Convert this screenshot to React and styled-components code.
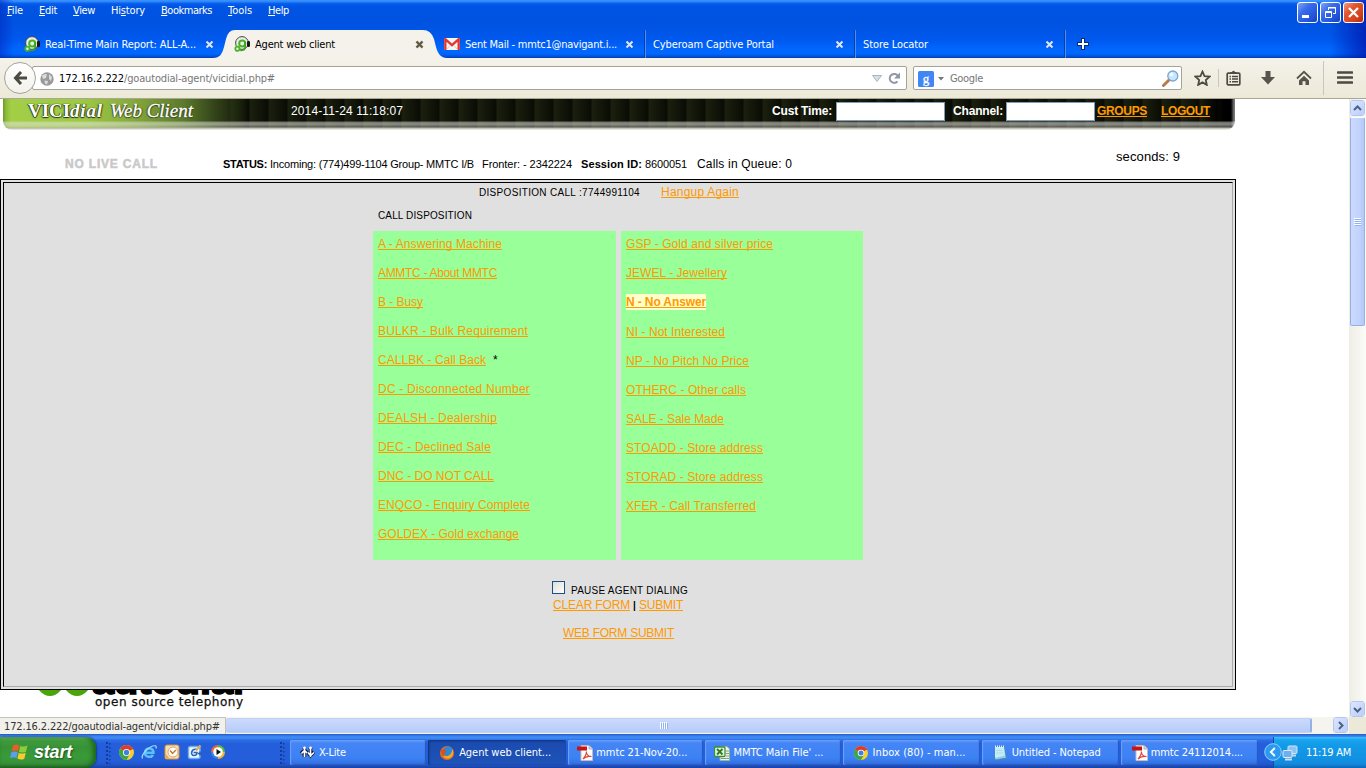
import React, { useLayoutEffect, useRef } from "react";
import styled, { createGlobalStyle, css } from "styled-components";

const Global = createGlobalStyle`
  * { box-sizing: border-box; }
  html, body { margin: 0; padding: 0; overflow: hidden; background: #fff; }
  svg { display: block; flex: none; }
`;

const ui = `"DejaVu Sans Condensed", "Noto Sans", sans-serif`;
const sans = `"Liberation Sans", Arial, sans-serif`;

/* ---------- text set to a fixed measure ---------- */

const TextBox = styled.span`
  display: inline-block;
  flex: none;
  white-space: pre;
  width: ${(p) => p.$w}px;
  margin-left: ${(p) => p.$ml || 0}px;
  color: ${(p) => p.$color || "inherit"};
  font-weight: ${(p) => (p.$bold ? 700 : "inherit")};
  font-size: ${(p) => (p.$size ? `${p.$size}px` : "inherit")};
`;

function Text({ w, ml, color, bold, size, children }) {
  const inner = useRef(null);
  useLayoutEffect(() => {
    const el = inner.current;
    el.style.letterSpacing = "0px";
    const n = el.textContent.length;
    el.style.letterSpacing = `${(w - el.getBoundingClientRect().width) / n}px`;
  }, [w, children]);
  return (
    <TextBox $w={w} $ml={ml} $color={color} $bold={bold} $size={size}>
      <span ref={inner}>{children}</span>
    </TextBox>
  );
}

/* ---------- window frame ---------- */

const Screen = styled.div`
  width: 1366px;
  height: 768px;
  display: flex;
  flex-direction: column;
  overflow: hidden;
  font-family: ${ui};
  font-size: 11px;
`;

const Frame = styled.header`
  height: 58px;
  display: flex;
  flex-direction: column;
  background: linear-gradient(90deg, rgba(0, 40, 190, 0.55) 0, rgba(0, 60, 220, 0) 14px, rgba(0, 60, 220, 0) 1330px, rgba(0, 20, 170, 0.75) 1366px),
    linear-gradient(180deg, #3d95ff 0, #2a83fa 2px, #0a62f0 3px, #0054e3 6px, #0053e1 22px, #0056e8 34px, #005bf2 42px, #0068ff 50px, #0066fd 54px, #004ccf 57px, #003aa8 58px);
`;

const TitleRow = styled.div`
  height: 30px;
  display: flex;
  justify-content: space-between;
`;

const MenuBar = styled.nav`
  display: flex;
  color: #fff;
  padding: 3px 0 0 7px;
  line-height: 15px;
  & u { text-underline-offset: 1px; text-decoration-thickness: 1px; }
`;

const WindowButtons = styled.div`
  display: flex;
  gap: 2px;
  padding: 2px 2px 0 0;
`;

const WindowButton = styled.div`
  width: 21px;
  height: 21px;
  border: 1px solid #fff;
  border-radius: 3px;
  display: flex;
  align-items: center;
  justify-content: center;
  background: ${(p) =>
    p.$close
      ? "linear-gradient(135deg, #f09a80 0, #e2552f 35%, #d8431c 70%, #b52c08 100%)"
      : "linear-gradient(135deg, #7fa4f4 0, #3a6cec 35%, #2457dd 70%, #1940b8 100%)"};
`;

const TabStrip = styled.div`
  height: 28px;
  display: flex;
  padding-left: 15px;
  color: #fff;
`;

const TabItem = styled.div`
  width: 210px;
  height: 28px;
  position: relative;
  display: flex;
  align-items: center;
  padding-left: ${(p) => p.$pad}px;
  color: ${(p) => (p.$active ? "#000" : "#fff")};
  ${(p) =>
    p.$line &&
    css`
      left: 1px;
      border-right: 1px solid #4a8ff5;
      box-shadow: inset -1px 0 0 #0a3ea8;
    `}
`;

const TabShape = styled.svg`
  position: absolute;
  left: -12px;
  top: 0;
`;

const TabIcon = styled.div`
  position: relative;
  width: 16px;
  margin-right: 5px;
`;

const TabLabel = styled.div`
  position: relative;
  flex: 1;
  line-height: 15px;
`;

const TabClose = styled.div`
  position: relative;
  margin-right: ${(p) => p.$mr}px;
`;

const PlusBox = styled.div`
  display: flex;
  align-items: center;
  padding-left: 12px;
`;

/* ---------- toolbar ---------- */

const Toolbar = styled.div`
  height: 41px;
  flex: none;
  display: flex;
  align-items: center;
  background: linear-gradient(180deg, #f4f2ea, #ece9d8);
  border-bottom: 1px solid #a9a799;
`;

const BackButton = styled.div`
  width: 32px;
  height: 32px;
  margin: 0 0 1px 4px;
  flex: none;
  border-radius: 50%;
  border: 1px solid #a3a39c;
  background: linear-gradient(180deg, #fff, #f3f1e9);
  display: flex;
  align-items: center;
  justify-content: center;
  z-index: 1;
`;

const Field = styled.div`
  height: 24px;
  width: ${(p) => p.$w}px;
  margin-left: ${(p) => p.$ml}px;
  padding: 2px 0 0 ${(p) => p.$pl}px;
  margin-bottom: 1px;
  border: 1px solid #a4a299;
  border-radius: 2px;
  background: #fff;
  display: flex;
  align-items: center;
  line-height: 15px;
`;

const Push = styled.div`
  margin-left: auto;
  margin-right: ${(p) => p.$mr || 0}px;
`;

const ToolIcons = styled.div`
  flex: 1;
  display: flex;
  align-items: center;
  padding: 0 0 1px 12px;
`;

const ToolSlot = styled.div`
  width: ${(p) => p.$w}px;
  display: flex;
  flex: none;
`;

const ToolLine = styled.div`
  width: 1px;
  height: ${(p) => p.$h}px;
  margin: 0 ${(p) => p.$mr}px 0 ${(p) => p.$ml}px;
  background: #c9c7bb;
`;

/* ---------- page ---------- */

const Viewport = styled.main`
  height: 618px;
  flex: none;
  display: flex;
`;

const Page = styled.div`
  width: 1349px;
  height: 618px;
  overflow: hidden;
  background: #fff;
  font-family: ${sans};
  font-size: 12px;
  color: #000;
`;

const Banner = styled.div`
  width: 1232px;
  height: 31px;
  margin-left: 3px;
  display: flex;
  align-items: flex-start;
  color: #fff;
  border-radius: 0 0 9px 9px;
  background: linear-gradient(180deg, transparent 28px, #b3b1a0 29px, #d8d7cf 30px, #f0f0ee 31px),
    linear-gradient(180deg, transparent 22px, rgba(225, 225, 220, 0.45) 23px, rgba(225, 225, 220, 0.6) 25px, rgba(225, 225, 220, 0.35) 28px),
    linear-gradient(90deg, #6f9a28 0, #8fba3a 3px, #a3cf47 8px, #9dc843 80px, #86a93c 130px, #5c7a2c 180px, #2f3e17 215px, rgba(20, 26, 8, 0) 245px),
    linear-gradient(90deg, transparent 1196px, #000 1222px, #000 1228px, #777 1231px),
    repeating-linear-gradient(90deg, #1b200e 0, #0a0c05 18px, #1b200e 19px);
`;

const Brand = styled.div`
  width: 288px;
  padding: 1px 0 0 25px;
  font: 700 19px/22px "Liberation Serif", serif;
  text-shadow: 0 1px 1px #24300c, 1px 0 1px #3c4e17, -1px 0 1px #3c4e17;
  display: flex;
`;

const BrandThin = styled.i`
  font-weight: 400;
  -webkit-text-stroke: 0.3px #fff;
`;

const BannerText = styled.div`
  line-height: 15px;
  padding-top: 5px;
  margin-left: ${(p) => p.$ml || 0}px;
`;

const Input = styled.div`
  width: ${(p) => p.$w}px;
  height: 19px;
  margin: 3px 0 0 ${(p) => p.$ml}px;
  background: #fff;
  border: 1px solid #7f9db9;
`;

const Link = styled.a`
  color: #ff9900;
  ${(p) =>
    p.$picked &&
    css`
      background: #ffffcc;
      height: 16px;
      margin-top: -1px;
      padding-top: 1px;
    `}
  & span span {
    text-decoration: underline;
    text-decoration-skip-ink: none;
    text-decoration-thickness: 1px;
    text-underline-offset: 1px;
  }
`;

const StatusRow = styled.div`
  height: 49px;
  display: flex;
  align-items: flex-end;
  padding: 0 0 7px 65px;
  line-height: 15px;
`;

const NoLive = styled.div`
  color: #c9c9c9;
  font-size: 12px;
  -webkit-text-stroke: 0.5px #c9c9c9;
`;

const Seconds = styled.div`
  margin-left: 324px;
  align-self: flex-start;
  font-size: 13px;
  padding-top: 19px;
`;

const Panel = styled.section`
  width: 1236px;
  height: 511px;
  border: 1px solid #000;
  padding: 2px;
  background: #e0e0e0;
`;

const PanelInner = styled.div`
  height: 505px;
  border: 1px solid;
  border-color: #000 #aaa #aaa #000;
  display: flex;
  flex-direction: column;
`;

const DispoTitle = styled.div`
  height: 23px;
  display: flex;
  align-items: baseline;
  padding: 2px 0 0 475px;
  line-height: 15px;
`;

const SubTitle = styled.div`
  height: 25px;
  padding: 2px 0 0 374px;
  line-height: 15px;
`;

const Columns = styled.div`
  display: flex;
  gap: 5px;
  padding-left: 369px;
`;

const Column = styled.div`
  width: ${(p) => p.$w}px;
  height: 329px;
  background: #99ff99;
  padding: 6px 0 0 5px;
  display: flex;
  flex-direction: column;
  gap: 14px;
`;

const Option = styled.div`
  line-height: 15px;
  height: ${(p) => (p.$picked ? 16 : 15)}px;
  display: flex;
  white-space: pre;
`;

const Pause = styled.div`
  display: flex;
  padding: 21px 0 0 548px;
  height: 38px;
`;

const CheckBox = styled.div`
  width: 13px;
  height: 13px;
  border: 1px solid #1c5180;
  background: linear-gradient(135deg, #dcdcd7, #fff);
`;

const PauseLabel = styled.div`
  margin-left: 6px;
  padding-top: 2px;
  line-height: 15px;
`;

const FormLinks = styled.div`
  display: flex;
  padding-left: ${(p) => p.$pl}px;
  height: 28px;
  line-height: 15px;
`;

const Footer = styled.div`
  height: 27px;
  padding-left: 36px;
`;

/* ---------- scroll bars ---------- */

const VScroll = styled.div`
  width: 17px;
  height: 618px;
  background: linear-gradient(90deg, #eeede5, #fbfbf8);
  display: flex;
  flex-direction: column;
  justify-content: space-between;
  padding: 1px 0 0 1px;
`;

const HScrollRow = styled.div`
  height: 17px;
  flex: none;
  display: flex;
  background: #f5f4ee;
`;

const ScrollButton = styled.div`
  width: 15px;
  height: 16px;
  flex: none;
  border: 1px solid #fff;
  border-radius: 3px;
  outline: 1px solid #b4c6f0;
  outline-offset: -1px;
  background: linear-gradient(135deg, #dce6ff, #b9cefa);
  display: flex;
  align-items: center;
  justify-content: center;
`;

const VThumb = styled.div`
  width: 15px;
  height: 209px;
  margin-top: 1px;
  border: 1px solid #98b0e8;
  border-top-color: #fff;
  border-radius: 2px;
  background: linear-gradient(90deg, #cbd9fd, #c2d4fd 60%, #b4c9f8);
  display: flex;
  align-items: center;
  justify-content: center;
`;

const HThumb = styled.div`
  width: 1086px;
  height: 15px;
  margin-top: 1px;
  border: 1px solid #c3d1f3;
  border-width: 1px 2px 1px 0;
  border-right-color: #98b0e8;
  border-radius: 2px;
  background: linear-gradient(180deg, #cbd9fb, #bfd2fc 60%, #b6cbf8);
  display: flex;
  align-items: center;
  padding-left: 434px;
`;

const StatusTip = styled.div`
  width: 226px;
  height: 17px;
  background: #f1f0ea;
  border: solid #c4c2b8;
  border-width: 1px 1px 0 0;
  color: #333;
  padding-left: 4px;
  line-height: 17px;
`;

const Corner = styled.div`
  width: 17px;
  height: 17px;
  background: #ece9d8;
`;

/* ---------- task bar ---------- */

const Taskbar = styled.footer`
  height: 34px;
  flex: none;
  display: flex;
  color: #fff;
  background: linear-gradient(180deg, #1f58c4 0, #3a80ee 2px, #3f8df4 4px, #2c6de6 6px, #245edb 10px, #245edb 26px, #2258d0 30px, #1941a5 34px);
`;

const StartButton = styled.div`
  width: 96px;
  height: 31px;
  margin-top: 3px;
  display: flex;
  align-items: center;
  padding: 0 0 2px 10px;
  gap: 5px;
  border-radius: 0 10px 10px 0;
  background: linear-gradient(180deg, #6fb86b 0, #3f9c3c 4px, #379337 10px, #399a38 20px, #36903a 27px, #236b24 31px);
  box-shadow: inset -3px 0 5px rgba(16, 80, 16, 0.7), 1px 0 2px #123c8f;
`;

const StartText = styled.div`
  font: italic 700 18px/20px ${sans};
  text-shadow: 1px 1px 2px #1d4f1d;
`;

const QuickLaunch = styled.div`
  display: flex;
  align-items: center;
  width: 174px;
  gap: 7px;
`;

const GripSlot = styled.div`
  padding-top: 4px;
  display: flex;
  align-items: center;
  width: 10px;
`;

const GripFirst = styled(GripSlot)`
  width: 5px;
  margin: 0 8px 0 10px;
`;

const Launchers = styled.div`
  display: flex;
  align-items: center;
  width: 161px;
  gap: 7px;
  padding-top: 2px;
`;

const Tasks = styled.div`
  display: flex;
  width: 968px;
  padding-top: 6px;
  gap: 2px;
`;

const Task = styled.div`
  flex: 1 1 0;
  min-width: 0;
  height: 25px;
  border-radius: 2px;
  display: flex;
  align-items: center;
  padding-left: ${(p) => p.$pl}px;
  background: ${(p) =>
    p.$active
      ? "linear-gradient(180deg, #153c8c 0, #1a4bb0 3px, #1e52b7 22px, #2159c4)"
      : "linear-gradient(180deg, #6aa0fb 0, #4585f6 3px, #3c81f3 18px, #3370e0 24px)"};
  box-shadow: ${(p) => (p.$active ? "inset 1px 0 2px #10306e" : "inset 1px 0 1px #6da2fa, inset -1px -1px 1px #2458bd")};
`;

const Tray = styled.div`
  flex: 1;
  margin-top: 3px;
  margin-left: 15px;
  display: flex;
  align-items: center;
  position: relative;
  padding-left: 8px;
  border-left: 1px solid #0d4fa5;
  background: linear-gradient(180deg, #3fc0f8 0, #19a5ee 3px, #139ae9 8px, #1191e2 22px, #1489dd 27px, #0d66b5 31px);
`;

const TrayArrow = styled.div`
  position: absolute;
  left: -10px;
  top: 6px;
`;

/* ---------- icons ---------- */

const GoIcon = () => (
  <svg width="16" height="16" viewBox="0 0 16 16">
    <circle cx="8" cy="7" r="6.400" fill="#e9ece9" stroke="#444" strokeWidth="1" />
    <rect x="13" y="5" width="3" height="6" rx="1.300" fill="#161616" />
    <circle cx="8.200" cy="7.400" r="3" fill="#e9ece9" stroke="#49b423" strokeWidth="2" />
    <circle cx="3.400" cy="12.800" r="2.100" fill="#e9ece9" stroke="#49b423" strokeWidth="1.700" />
    <path d="M11.200 6v4.500q0 4-5 4" fill="none" stroke="#3da31c" strokeWidth="1.700" />
  </svg>
);

const GmailIcon = () => (
  <svg width="16" height="12" viewBox="0 0 16 12">
    <rect width="16" height="12" rx="1" fill="#f6f6f6" />
    <path d="M1.300 12V1.200L8 7.200l6.700-6V12" fill="none" stroke="#e0382f" strokeWidth="2.400" />
    <path d="M3 11l3.500-4M13 11L9.500 7" stroke="#d6b9b5" strokeWidth="0.700" />
  </svg>
);

const CloseGlyph = ({ fill, edge }) => (
  <svg width="9" height="9" viewBox="0 0 9 9">
    <path d="M1.500 1.500l6 6M7.500 1.500l-6 6" stroke={edge} strokeWidth="2.900" />
    <path d="M1.500 1.500l6 6M7.500 1.500l-6 6" stroke={fill} strokeWidth="2.200" />
  </svg>
);

const ChromeIcon = ({ s = 14 }) => (
  <svg width={s} height={s} viewBox="0 0 14 14">
    <circle cx="7" cy="7" r="7" fill="#f8cf2c" />
    <path d="M7 7L.940 3.500A7 7 0 0 1 13.060 3.500z" fill="#e03c2c" />
    <path d="M.940 3.500A7 7 0 0 0 7 14L10 8.700 7 7z" fill="#3aa549" />
    <path d="M7 3.500h6.060" stroke="#e03c2c" strokeWidth="1" />
    <circle cx="7" cy="7" r="3.300" fill="#fff" />
    <circle cx="7" cy="7" r="2.500" fill="#3f7fe0" />
  </svg>
);

const IEIcon = () => (
  <svg width="16" height="16" viewBox="0 0 16 16">
    <path d="M3.800 8.700h8.700C12.700 3 4 3 4 8.500c0 5 6.300 5.500 8 2.300" fill="none" stroke="#5cc0f8" strokeWidth="2.500" />
    <path d="M1.500 14.500C-.5 11 9 1 14.500 1.800c1 .3.800 1.700.3 2.700" fill="none" stroke="#9fdcff" strokeWidth="1.200" />
  </svg>
);

const OutlookIcon = () => (
  <svg width="16" height="16" viewBox="0 0 16 16">
    <rect x="1" y="1" width="14" height="14" rx="2" fill="#f8dfae" stroke="#d98f3c" />
    <path d="M1 15V9l5 6z" fill="#f0a848" />
    <circle cx="9" cy="8" r="5" fill="#fff" stroke="#d9a565" />
    <path d="M6 6.500l2.500 3L12 6" stroke="#c77a30" strokeWidth="1.500" fill="none" />
  </svg>
);

const DesktopIcon = () => (
  <svg width="16" height="16" viewBox="0 0 16 16">
    <rect x="1.500" y="2.500" width="11.500" height="12" rx="2" fill="#f4f8ff" stroke="#67b0f0" strokeWidth="1.500" />
    <path d="M10 5.500c-6-1.500-7 6-3 6 2.500 0 3-1.500 3-3H6.500" fill="none" stroke="#2667b8" strokeWidth="1.600" />
    <path d="M9 6.500l4.500-5" stroke="#e8a860" strokeWidth="2" />
    <path d="M11 9.500h4M13 7.500v4" stroke="#2a5ea8" strokeWidth="1.500" />
  </svg>
);

const MediaIcon = () => (
  <svg width="16" height="16" viewBox="0 0 16 16">
    <path d="M8 1a7 7 0 0 1 7 7H8z" fill="#58b947" />
    <path d="M8 1a7 7 0 0 0-7 7h7z" fill="#e86b29" />
    <path d="M1 8a7 7 0 0 0 7 7V8z" fill="#3b82e0" />
    <path d="M15 8a7 7 0 0 1-7 7V8z" fill="#f6b62a" />
    <circle cx="8" cy="8" r="4.800" fill="#fff" />
    <path d="M6.500 5L11 8l-4.500 3z" fill="#111" />
  </svg>
);

const WindowsFlag = () => (
  <svg width="19" height="18" viewBox="0 0 19 18">
    <path d="M3 2.500Q6 .5 9.300 2.300L8 8.300Q5 6.800 1.500 8.500z" fill="#ee5a28" />
    <path d="M10.300 2.700Q13.500 4.500 17.500 2.500L16 8.700Q12.500 10.500 9 8.700z" fill="#8bce3a" />
    <path d="M1.300 9.500Q4.500 7.800 7.800 9.300L6.500 15Q3.500 13.500 0 15.200z" fill="#5c9df2" />
    <path d="M8.800 9.700Q12 11.500 15.800 9.700L14.300 15.700Q11 17.500 7.400 15.500z" fill="#fbca2b" />
  </svg>
);

const Grip = () => (
  <svg width="5" height="22" viewBox="0 0 5 22">
    {[0, 4, 8, 12, 16, 20].map((y) => (
      <g key={y}>
        <rect x="0" y={y} width="2" height="2" fill="#123d94" />
        <rect x="3" y={y + 1} width="1.500" height="1.500" fill="#123d94" />
      </g>
    ))}
  </svg>
);

const XLiteIcon = () => (
  <svg width="15" height="15" viewBox="0 0 15 15">
    <path d="M4.500 3v9M1 8.500L4.500 5l2.500 3M10.500 3v9M8 7.500l2.500 3L14 7" fill="none" stroke="#12203c" strokeWidth="3.600" />
    <path d="M4.500 4v8M1.500 8.500L4.500 5.500l2.500 2.500M10.500 4v8M8 7.500l2.500 3 3.500-3" fill="none" stroke="#fff" strokeWidth="1.600" />
    <circle cx="4.500" cy="3" r="1.400" fill="#fff" />
    <circle cx="10.500" cy="3" r="1.400" fill="#fff" />
  </svg>
);

const FirefoxIcon = () => (
  <svg width="14" height="14" viewBox="0 0 14 14">
    <circle cx="7" cy="7" r="7" fill="#e66a1e" />
    <circle cx="7.800" cy="5.500" r="5" fill="#2f88d4" />
    <path d="M12.500 3Q15 10 9 12.500 3.500 13 3 8.500q2 2.500 4.500 1.500Q11.500 9 12.500 3z" fill="#f7a824" />
    <path d="M.8 3Q2 4 4 3.500 6 4 6.500 6L4 7.500 5 9 2.500 10z" fill="#d6501a" />
  </svg>
);

const PdfIcon = () => (
  <svg width="16" height="16" viewBox="0 0 16 16">
    <path d="M4 .5h8l3.500 3.500v11.500H4z" fill="#fdfdfd" stroke="#c8bcbc" />
    <path d="M12 .5V4h3.500" fill="#ddd" stroke="#999" strokeWidth="0.700" />
    <rect x="0" y="1.500" width="10" height="4" fill="#c51616" />
    <path d="M6 14Q10 9 9.300 6.500M9.300 7Q10 11.500 14.500 11.500 9 10.500 6 14" fill="none" stroke="#e0453a" strokeWidth="1.200" />
  </svg>
);

const ExcelIcon = () => (
  <svg width="16" height="16" viewBox="0 0 16 16">
    <path d="M6 1.500h7l2.500 2.500v11.500H6z" fill="#eef3ee" stroke="#9bb49b" />
    <path d="M12 6h3M12 8.500h3M12 11h3M7 13.500h8" stroke="#76a876" />
    <rect x=".5" y="2" width="10.500" height="9.500" rx="1" fill="#e6f4e0" stroke="#3b8f33" strokeWidth="1.300" />
    <path d="M3 4l5.500 5.500M8.500 4L3 9.500" stroke="#2e7d28" strokeWidth="1.900" />
  </svg>
);

const NotepadIcon = () => (
  <svg width="14" height="16" viewBox="0 0 14 16">
    <path d="M2 2h9l2.500 11L2 15z" fill="#8fd0e6" stroke="#4a8aa4" strokeWidth="0.800" />
    <path d="M2 2h9l1 8.500L2 13z" fill="#c3edf8" />
    <path d="M2 1.500h9" stroke="#e8f1f4" strokeWidth="2" strokeDasharray="1 1" />
    <path d="M3.500 5.500h6M3.500 8h7" stroke="#a9dcea" />
  </svg>
);

const NetworkIcon = () => (
  <svg width="16" height="16" viewBox="0 0 16 16">
    <rect x="6" y="1" width="9" height="7.500" rx="1" fill="#8cc4f6" stroke="#d3e3f5" />
    <path d="M8 10.500h6" stroke="#c9d6e6" strokeWidth="2" />
    <rect x="1" y="5.500" width="9" height="7" rx="1" fill="#6db0f0" stroke="#dfeaf7" />
    <path d="M3 14.500h7" stroke="#d3dfec" strokeWidth="2" />
  </svg>
);

const Chevron = ({ turn = 0 }) => (
  <svg width="9" height="9" viewBox="0 0 9 9">
    <path d="M1 6l3.500-3.500L8 6" fill="none" stroke="#4d6185" strokeWidth="2" transform={`rotate(${turn} 4.500 4.500)`} />
  </svg>
);

const tools = {
  star: (
    <svg width="17" height="16" viewBox="0 0 17 16">
      <path d="M8.500 1.500l2 4.600 5 .5-3.700 3.400 1 4.900-4.300-2.500-4.300 2.500 1-4.900L1.500 6.600l5-.5z" fill="none" stroke="#4b4a43" strokeWidth="1.800" />
    </svg>
  ),
  list: (
    <svg width="15" height="16" viewBox="0 0 15 16">
      <rect x="1.200" y="3.200" width="12.600" height="11.600" rx="1" fill="none" stroke="#4b4a43" strokeWidth="1.700" />
      <path d="M4.500 4V2h1.500q1.500-2.500 3 0h1.500v2z" fill="#4b4a43" />
      <path d="M3.500 6.500h1.500M6 6.500h6M3.500 9h1.500M6 9h6M3.500 11.700h1.500M6 11.700h6" stroke="#4b4a43" strokeWidth="1.400" />
    </svg>
  ),
  down: (
    <svg width="14" height="14" viewBox="0 0 14 14">
      <path d="M4.500 0h5v6H14L7 13.500 0 6h4.500z" fill="#56544c" />
    </svg>
  ),
  home: (
    <svg width="16" height="15" viewBox="0 0 16 15">
      <path d="M1 8.500L8 1.800l7 6.700" fill="none" stroke="#56544c" strokeWidth="1.800" />
      <path d="M3 10.500L8 5.700l5 4.800V15H9.500v-3.800h-3V15H3z" fill="#56544c" />
    </svg>
  ),
  menu: (
    <svg width="16" height="13" viewBox="0 0 16 13">
      <path d="M1 1.500h14M1 6.500h14M1 11.500h14" stroke="#4b4a43" strokeWidth="2.600" strokeLinecap="round" />
    </svg>
  ),
};

/* ---------- data ---------- */

const menus = [
  ["F", "ile", 16, 0, ""],
  ["E", "dit", 18, 16, ""],
  ["V", "iew", 22, 16, ""],
  ["s", "tory", 34, 16, "Hi"],
  ["B", "ookmarks", 51, 16, ""],
  ["T", "ools", 24, 16, ""],
  ["H", "elp", 21, 16, ""],
];

const left = [
  ["A - Answering Machine", 124],
  ["AMMTC - About MMTC", 119],
  ["B - Busy", 45],
  ["BULKR - Bulk Requirement", 150],
  ["CALLBK - Call Back", 108, "*"],
  ["DC - Disconnected Number", 152],
  ["DEALSH - Dealership", 119],
  ["DEC - Declined Sale", 113],
  ["DNC - DO NOT CALL", 116],
  ["ENQCO - Enquiry Complete", 152],
  ["GOLDEX - Gold exchange", 141],
];

const right = [
  ["GSP - Gold and silver price", 147],
  ["JEWEL - Jewellery", 101],
  ["N - No Answer", 80, null, true],
  ["NI - Not Interested", 99],
  ["NP - No Pitch No Price", 123],
  ["OTHERC - Other calls", 120],
  ["SALE - Sale Made", 98],
  ["STOADD - Store address", 137],
  ["STORAD - Store address", 137],
  ["XFER - Call Transferred", 130],
];

const tasks = [
  ["X-Lite", 27, <XLiteIcon />, 10],
  ["Agent web client...", 92, <FirefoxIcon />, 12, true],
  ["mmtc 21-Nov-20...", 91, <PdfIcon />, 9],
  ["MMTC Main File' ...", 90, <ExcelIcon />, 9],
  ["Inbox (80) - man...", 93, <ChromeIcon />, 11],
  ["Untitled - Notepad", 89, <NotepadIcon />, 11],
  ["mmtc 24112014....", 92, <PdfIcon />, 11],
];

const pale = { fill: "#d5e4ff", edge: "#0c4bc0" };

function Options({ items, width }) {
  return (
    <Column $w={width}>
      {items.map(([label, w, mark, picked]) => (
        <Option key={label} $picked={picked}>
          <Link $picked={picked}>
            <Text w={w} bold={picked}>{label}</Text>
          </Link>
          {mark && <Text w={6} ml={7}>{mark}</Text>}
        </Option>
      ))}
    </Column>
  );
}

export default function App() {
  return (
    <Screen>
      <Global />
      <Frame>
        <TitleRow>
          <MenuBar>
            {menus.map(([key, rest, w, ml, pre]) => (
              <Text key={rest} w={w} ml={ml}>{pre}<u>{key}</u>{rest}</Text>
            ))}
          </MenuBar>
          <WindowButtons>
            <WindowButton>
              <svg width="15" height="15"><rect x="2" y="10" width="7" height="3" fill="#fff" /></svg>
            </WindowButton>
            <WindowButton>
              <svg width="15" height="15" fill="none" stroke="#fff">
                <path d="M5.500 5V2.500h7v6H10M5 3h8" />
                <path d="M2.500 6.500h6v6h-6zM2 7.500h7" />
              </svg>
            </WindowButton>
            <WindowButton $close>
              <svg width="15" height="15"><path d="M3 3l9 9M12 3l-9 9" stroke="#fff" strokeWidth="2.300" /></svg>
            </WindowButton>
          </WindowButtons>
        </TitleRow>
        <TabStrip>
          <TabItem $pad={9}>
            <TabIcon><GoIcon /></TabIcon>
            <TabLabel><Text w={151}>Real-Time Main Report: ALL-A...</Text></TabLabel>
            <TabClose $mr={11}><CloseGlyph {...pale} /></TabClose>
          </TabItem>
          <TabItem $pad={9} $active>
            <TabShape width="234" height="28" viewBox="0 0 234 28">
              <path d="M0 28C7 28 9 24 11 17L13 9Q15 0 22 0H210Q218 0 221 9L223 17C225 24 228 28 234 28z" fill="#f4f2ea" />
            </TabShape>
            <TabIcon><GoIcon /></TabIcon>
            <TabLabel><Text w={80}>Agent web client</Text></TabLabel>
            <TabClose $mr={11}><CloseGlyph fill="#5f5a48" edge="#c8c4b4" /></TabClose>
          </TabItem>
          <TabItem $pad={8} $line>
            <TabIcon><GmailIcon /></TabIcon>
            <TabLabel><Text w={152}>Sent Mail - mmtc1@navigant.i...</Text></TabLabel>
            <TabClose $mr={11}><CloseGlyph {...pale} /></TabClose>
          </TabItem>
          <TabItem $pad={7} $line>
            <TabLabel><Text w={121}>Cyberoam Captive Portal</Text></TabLabel>
            <TabClose $mr={11}><CloseGlyph {...pale} /></TabClose>
          </TabItem>
          <TabItem $pad={7} $line>
            <TabLabel><Text w={65}>Store Locator</Text></TabLabel>
            <TabClose $mr={11}><CloseGlyph {...pale} /></TabClose>
          </TabItem>
          <PlusBox>
            <svg width="12" height="12" viewBox="0 0 12 12">
              <path d="M6 0v12M0 6h12" stroke="#0a2a6a" strokeWidth="4" />
              <path d="M6 1v10M1 6h10" stroke="#fff" strokeWidth="2" />
            </svg>
          </PlusBox>
        </TabStrip>
      </Frame>

      <Toolbar>
        <BackButton>
          <svg width="15" height="14" viewBox="0 0 15 14">
            <path d="M8 1L2.500 7 8 13M3 7h11" fill="none" stroke="#4b4a43" strokeWidth="3" />
          </svg>
        </BackButton>
        <Field $w={875} $ml={-4} $pl={7}>
          <svg width="14" height="14" viewBox="0 0 14 14">
            <circle cx="7" cy="7" r="6.700" fill="#9a9a9a" />
            <path d="M2 3.500Q5 1 7 2.500L6 6 3 7zM9 2l3 3-1 4-2-2zM4.500 8.500L8 9l-1 3.500-2-1z" fill="#dcdcdc" />
          </svg>
          <Text w={65} ml={5} color="#000">172.16.2.222</Text>
          <Text w={151} color="#777">/goautodial-agent/vicidial.php#</Text>
          <Push $mr={6}>
            <svg width="10" height="7" viewBox="0 0 10 7"><path d="M.5.500h9L5 6.500z" fill="#d8e0e6" stroke="#a9b4bd" /></svg>
          </Push>
          <svg width="13" height="13" viewBox="0 0 13 13">
            <path d="M9.500 9.500A4.500 4.500 0 1 1 10 4" fill="none" stroke="#8f99a3" strokeWidth="2" />
            <path d="M12 .5v6H6z" fill="#8f99a3" />
          </svg>
          <ToolSlot $w={5} />
        </Field>
        <Field $w={269} $ml={6} $pl={4}>
          <svg width="16" height="16" viewBox="0 0 16 16">
            <rect width="16" height="16" rx="1.500" fill="#4285f4" />
            <text x="8" y="11.500" textAnchor="middle" fontFamily="Liberation Serif, serif" fontSize="13" fill="#fff" stroke="#fff" strokeWidth="0.300">g</text>
          </svg>
          <ToolSlot $w={4} />
          <svg width="6" height="4"><path d="M0 0h6L3 3.500z" fill="#777" /></svg>
          <Text w={33} ml={6} color="#777">Google</Text>
          <Push $mr={2}>
            <svg width="17" height="17" viewBox="0 0 17 17">
              <path d="M1.500 15.500l6-6" stroke="#b97a4a" strokeWidth="3" strokeLinecap="round" />
              <circle cx="10.800" cy="6" r="5" fill="#c6e6fb" stroke="#7aa5d8" strokeWidth="1.300" />
              <circle cx="9.500" cy="4.500" r="2" fill="#effaff" />
            </svg>
          </Push>
        </Field>
        <ToolIcons>
          <ToolSlot $w={17}>{tools.star}</ToolSlot>
          <ToolLine $h={18} $ml={7} $mr={7} />
          <ToolSlot $w={35}>{tools.list}</ToolSlot>
          <ToolSlot $w={35}>{tools.down}</ToolSlot>
          <ToolSlot $w={16}>{tools.home}</ToolSlot>
          <ToolLine $h={34} $ml={11} $mr={13} />
          {tools.menu}
        </ToolIcons>
      </Toolbar>

      <Viewport>
        <Page>
          <Banner>
            <Brand>
              <Text w={42}>VICI</Text>
              <i><Text w={33}>dial</Text></i>
              <BrandThin><Text w={83} ml={7}>Web Client</Text></BrandThin>
            </Brand>
            <BannerText><Text w={112}>2014-11-24 11:18:07</Text></BannerText>
            <BannerText $ml={369}><Text w={60} bold>Cust Time:</Text></BannerText>
            <Input $w={109} $ml={4} />
            <BannerText $ml={8}><Text w={50} bold>Channel:</Text></BannerText>
            <Input $w={89} $ml={3} />
            <BannerText $ml={2}><Link><Text w={50} bold>GROUPS</Text></Link></BannerText>
            <BannerText $ml={14}><Link><Text w={49} bold>LOGOUT</Text></Link></BannerText>
          </Banner>
          <StatusRow>
            <NoLive><Text w={93} bold>NO LIVE CALL</Text></NoLive>
            <Text w={44} ml={65} size={11} bold>STATUS:</Text>
            <Text w={204} ml={3} size={11}>Incoming: (774)499-1104 Group- MMTC I/B</Text>
            <Text w={90} ml={8} size={11}>Fronter: - 2342224</Text>
            <Text w={61} ml={9} size={11} bold>Session ID:</Text>
            <Text w={42} ml={3} size={11}>8600051</Text>
            <Text w={95} ml={10}>Calls in Queue: 0</Text>
            <Seconds><Text w={64}>seconds: 9</Text></Seconds>
          </StatusRow>
          <Panel>
            <PanelInner>
              <DispoTitle>
                <Text w={161} size={10}>DISPOSITION CALL :7744991104</Text>
                <Link><Text w={78} ml={21}>Hangup Again</Text></Link>
              </DispoTitle>
              <SubTitle><Text w={94} size={10}>CALL DISPOSITION</Text></SubTitle>
              <Columns>
                <Options items={left} width={243} />
                <Options items={right} width={242} />
              </Columns>
              <Pause>
                <CheckBox />
                <PauseLabel><Text w={117} size={10}>PAUSE AGENT DIALING</Text></PauseLabel>
              </Pause>
              <FormLinks $pl={549}>
                <Link><Text w={77}>CLEAR FORM</Text></Link>
                <Text w={3} ml={3} size={10} bold>|</Text>
                <Link><Text w={44} ml={3}>SUBMIT</Text></Link>
              </FormLinks>
              <FormLinks $pl={559}>
                <Link><Text w={111}>WEB FORM SUBMIT</Text></Link>
              </FormLinks>
            </PanelInner>
          </Panel>
          <Footer>
            <svg width="215" height="27" viewBox="36 690 215 27">
              <ellipse cx="50" cy="680" rx="14" ry="16" fill="#4aa50a" />
              <ellipse cx="77" cy="680" rx="14" ry="16" fill="#4aa50a" />
              <text x="92" y="694" textLength="152" lengthAdjust="spacingAndGlyphs" fontFamily="Liberation Sans" fontWeight="700" fontSize="36" stroke="#000" strokeWidth="1.500">autodial</text>
              <text x="95" y="706" textLength="148" fontFamily="DejaVu Sans, sans-serif" fontSize="12" fill="#111" stroke="#111" strokeWidth="0.250">open source telephony</text>
            </svg>
          </Footer>
        </Page>
        <VScroll>
          <div>
            <ScrollButton><Chevron /></ScrollButton>
            <VThumb>
              <svg width="7" height="8" stroke="#fff"><path d="M0 .5h7M0 2.500h7M0 4.500h7M0 6.500h7" /><path d="M1 1.500h7M1 3.500h7M1 5.500h7M1 7.500h7" stroke="#8fb0f5" /></svg>
            </VThumb>
          </div>
          <ScrollButton><Chevron turn={180} /></ScrollButton>
        </VScroll>
      </Viewport>

      <HScrollRow>
        <StatusTip><Text w={216}>172.16.2.222/goautodial-agent/vicidial.php#</Text></StatusTip>
        <HThumb>
          <svg width="8" height="7" stroke="#fff"><path d="M.5 0v7M2.500 0v7M4.500 0v7M6.500 0v7" /><path d="M1.500 1v7M3.500 1v7M5.500 1v7M7.500 1v7" stroke="#8fb0f5" /></svg>
        </HThumb>
        <Push />
        <ScrollButton><Chevron turn={90} /></ScrollButton>
        <ToolSlot $w={1} />
        <Corner />
      </HScrollRow>

      <Taskbar>
        <StartButton>
          <WindowsFlag />
          <StartText><Text w={38}>start</Text></StartText>
        </StartButton>
        <GripFirst><Grip /></GripFirst>
        <Launchers>
          <ChromeIcon s={15} />
          <IEIcon />
          <OutlookIcon />
          <DesktopIcon />
          <MediaIcon />
        </Launchers>
        <GripSlot><Grip /></GripSlot>
        <Tasks>
          {tasks.map(([label, w, icon, pl, active]) => (
            <Task key={label} $pl={pl} $active={active}>
              <ToolSlot $w={19}>{icon}</ToolSlot>
              <Text w={w}>{label}</Text>
            </Task>
          ))}
        </Tasks>
        <Tray>
          <TrayArrow>
            <svg width="18" height="18" viewBox="0 0 18 18">
              <circle cx="9" cy="9" r="8.300" fill="#2a9af0" stroke="#8ed0fb" />
              <path d="M10.800 5L6.800 9l4 4" fill="none" stroke="#fff" strokeWidth="2" />
            </svg>
          </TrayArrow>
          <NetworkIcon />
          <Text w={45} ml={8}>11:19 AM</Text>
        </Tray>
      </Taskbar>
    </Screen>
  );
}
